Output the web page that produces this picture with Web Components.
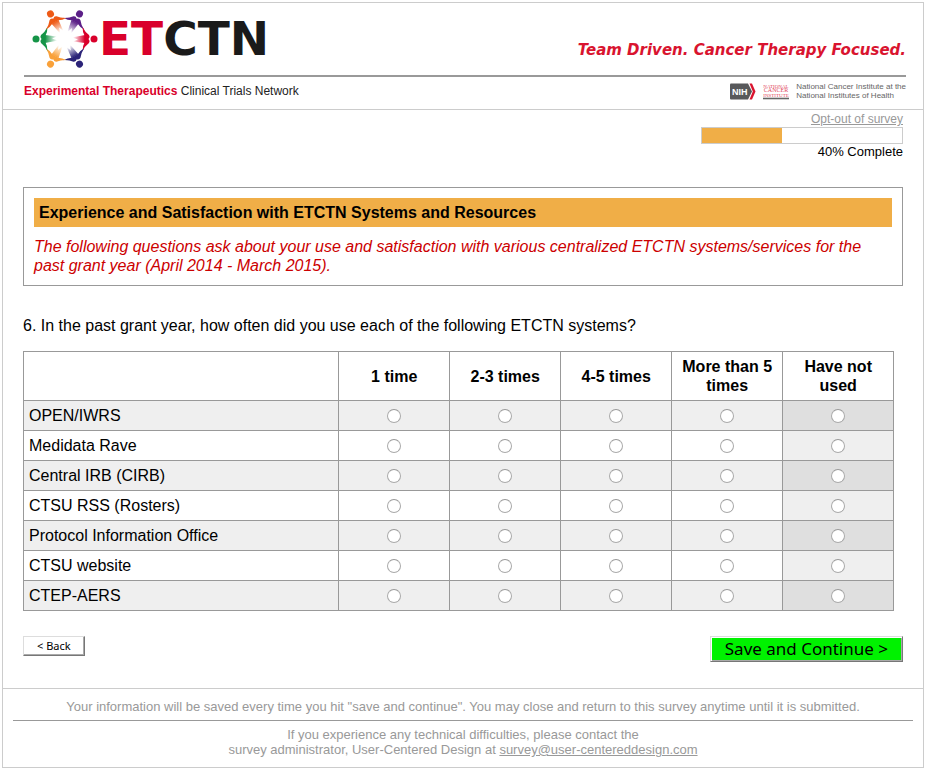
<!DOCTYPE html>
<html lang="en">
<head>
<meta charset="utf-8">
<title>ETCTN Survey</title>
<style>
  body {
    margin: 2px 1px 2px 2px;
    background: #fff;
    color: #000;
    font-family: "Liberation Sans", Arial, sans-serif;
    font-size: 16px;
    line-height: 19px;
  }
</style>
</head>
<body>
<survey-page>
  <etctn-header slot="header"></etctn-header>
  <survey-progress value="40"></survey-progress>
  <survey-intro>
    <span slot="title">Experience and Satisfaction with ETCTN Systems and Resources</span>
    The following questions ask about your use and satisfaction with various centralized ETCTN systems/services for the past grant year (April 2014 - March 2015).
  </survey-intro>
  <survey-matrix
    options="1 time|2-3 times|4-5 times|More than 5 times|Have not used"
    rows="OPEN/IWRS|Medidata Rave|Central IRB (CIRB)|CTSU RSS (Rosters)|Protocol Information Office|CTSU website|CTEP-AERS">6. In the past grant year, how often did you use each of the following ETCTN systems?</survey-matrix>
  <survey-actions></survey-actions>
  <survey-footer slot="footer"></survey-footer>
</survey-page>

<script>
class SurveyElement extends HTMLElement {
  constructor() {
    super();
    this.attachShadow({ mode: 'open' });
  }
  connectedCallback() {
    const template = document.createElement('template');
    template.innerHTML = `<style>${this.getStyles()}</style>${this.getTemplate()}`;
    this.shadowRoot.replaceChildren(template.content.cloneNode(true));
  }
}

class SurveyPage extends SurveyElement {
  getTemplate() {
    return `
      <slot name="header"></slot>
      <main><slot></slot></main>
      <slot name="footer"></slot>
    `;
  }
  getStyles() {
    return `
    :host {
      display: block;
      border: 1px solid #ccc;
    }
    main {
      padding: 2px 20px 26px;
    }
    `;
  }
}

class EtctnMark extends SurveyElement {
  // one figure, head up, turned round the centre for each colour
  getFigure(color, angle, i) {
    return `
      <linearGradient id="fade${i}" gradientUnits="userSpaceOnUse" x1="0" y1="-20" x2="0" y2="-8">
        <stop offset="0" stop-color="${color}"/>
        <stop offset="1" stop-color="${color}" stop-opacity="0"/>
      </linearGradient>
      <g transform="rotate(${angle})">
        <circle cx="0" cy="-29" r="3.5" fill="${color}"/>
        <path fill="${color}" d="M-12 -17.5Q-7 -20 -4 -24Q-2 -25.5 0 -23.5Q2 -25.5 4 -24Q7 -20 12 -17.5
          Q7 -17.5 3.5 -19.5H-3.5Q-7 -17.5 -12 -17.5Z"/>
        <path fill="url(#fade${i})" d="M-4 -20H4L2.6 -8L0.6 -13L-1.4 -7Z"/>
      </g>
    `;
  }
  getTemplate() {
    const colors = ['#5b1f87', '#d9002b', '#2b2378', '#f9a13a', '#159447', '#ee5a16'];
    return `
      <svg viewBox="-33 -33 66 66" width="66" height="66" aria-hidden="true">
        ${colors.map((color, i) => this.getFigure(color, 30 + i * 60, i)).join('')}
      </svg>
    `;
  }
  getStyles() {
    return `
    :host, svg {
      display: block;
    }
    `;
  }
}

class EtctnHeader extends SurveyElement {
  getTemplate() {
    return `
      <header>
        <div class="brand">
          <etctn-mark></etctn-mark>
          <div class="name"><b>ET</b>CTN</div>
          <div class="tagline">Team Driven. Cancer Therapy Focused.</div>
        </div>
        <div class="sub">
          <div class="network"><b>Experimental Therapeutics</b> Clinical Trials Network</div>
          <svg viewBox="0 0 26 17" width="26" height="17" role="img">
            <path d="M1 0.5H18L22 8.5L18 16.5H1Q0 16.5 0 15.5V1.5Q0 0.5 1 0.5Z" fill="#58595b"/>
            <path d="M19.5 0.5H22L25.5 8.5L22 16.5H19.5L22.8 8.5Z" fill="#d9142f"/>
            <text x="2" y="12" font-size="9" font-weight="bold" fill="#fff">NIH</text>
          </svg>
          <svg viewBox="0 0 26 17" width="26" height="17" role="img">
            <g font-family="Liberation Serif, serif" font-size="6" fill="#e2455a" text-anchor="middle">
              <text x="13" y="4.5" font-size="5">NATIONAL</text>
              <text x="13" y="9">CANCER</text>
              <text x="13" y="13.5" font-size="5">INSTITUTE</text>
            </g>
            <path d="M0 15.5H26" stroke="#666" stroke-width="1.6"/>
          </svg>
          <div class="nci-name">National Cancer Institute at the<br>National Institutes of Health</div>
        </div>
      </header>
    `;
  }
  getStyles() {
    return `
    :host {
      display: block;
      border-bottom: 1px solid #ccc;
    }
    header {
      padding: 0 17px 0 21px;
    }
    .brand {
      display: flex;
      align-items: center;
      height: 72px;
      padding-left: 8px;
      border-bottom: 2px solid #999;
    }
    .name {
      margin-left: 1px;
      color: #1a1a1a;
      font: bold 47px/60px "DejaVu Sans", sans-serif;
    }
    b {
      color: #d9002b;
    }
    .tagline {
      margin-left: auto;
      padding-top: 22px;
      color: #d9142f;
      font: italic bold 15px/19px "DejaVu Sans", sans-serif;
    }
    .sub {
      display: flex;
      align-items: center;
      gap: 7px;
      height: 28px;
      padding-bottom: 4px;
      color: #222;
      font-size: 12px;
    }
    .network {
      margin-right: auto;
    }
    .nci-name {
      color: #666;
      font-size: 8px;
      line-height: 9px;
    }
    `;
  }
}

class SurveyProgress extends SurveyElement {
  getTemplate() {
    const value = this.getAttribute('value');
    return `
      <a href="#opt-out">Opt-out of survey</a>
      <div class="bar" role="progressbar" aria-valuenow="${value}" aria-valuemin="0" aria-valuemax="100">
        <div class="fill"></div>
      </div>
      <div class="text">${value}% Complete</div>
    `;
  }
  getStyles() {
    return `
    :host {
      display: flex;
      flex-direction: column;
      align-items: flex-end;
      margin-bottom: 28px;
      line-height: 15px;
    }
    a {
      color: #999;
      font-size: 12px;
    }
    .bar {
      box-sizing: border-box;
      width: 202px;
      height: 17px;
      border: 1px solid #ccc;
    }
    .fill {
      width: ${this.getAttribute('value')}%;
      height: 100%;
      background: #f0ae47;
    }
    .text {
      font-size: 13px;
    }
    `;
  }
}

class SurveyIntro extends SurveyElement {
  getTemplate() {
    return `
      <h1><slot name="title"></slot></h1>
      <p><slot></slot></p>
    `;
  }
  getStyles() {
    return `
    :host {
      display: block;
      margin-bottom: 30px;
      padding: 10px;
      border: 1px solid #999;
    }
    h1 {
      margin: 0 0 10px;
      padding: 5px;
      background: #f0ae47;
      font-size: 16px;
    }
    p {
      margin: 0;
      color: #c00;
      font-style: italic;
    }
    `;
  }
}

class SurveyMatrix extends SurveyElement {
  getRow(name, row, options) {
    return `
      <tr>
        <th scope="row">${name}</th>
        ${options.map(option => `<td><input type="radio" name="row${row}" aria-label="${name}: ${option}"></td>`).join('')}
      </tr>
    `;
  }
  getTemplate() {
    const options = this.getAttribute('options').split('|');
    const rows = this.getAttribute('rows').split('|');
    return `
      <p><slot></slot></p>
      <table>
        <thead>
          <tr><td></td>${options.map(option => `<th scope="col">${option}</th>`).join('')}</tr>
        </thead>
        <tbody>${rows.map((name, i) => this.getRow(name, i, options)).join('')}</tbody>
      </table>
    `;
  }
  getStyles() {
    return `
    :host {
      display: block;
      margin-bottom: 25px;
    }
    p {
      margin: 0 0 16px;
    }
    table {
      width: 99%;
      table-layout: fixed;
      border-collapse: collapse;
    }
    th, td {
      box-sizing: border-box;
      height: 30px;
      padding: 0 5px;
      border: 1px solid #999;
    }
    thead th {
      width: 111px;
      height: 49px;
    }
    tbody th {
      font-weight: normal;
      text-align: left;
    }
    tbody tr:nth-child(odd) {
      background: #efefef;
    }
    tbody td:last-child {
      background: #efefef;
    }
    tbody tr:nth-child(odd) td:last-child {
      background: #dfdfdf;
    }
    input {
      appearance: none;
      display: block;
      width: 14px;
      height: 14px;
      margin: 0 auto;
      border: 1px solid #aaa;
      border-top-color: #999;
      border-radius: 50%;
      background: #fff;
    }
    input:checked {
      background: radial-gradient(#333 3px, #fff 4px);
    }
    `;
  }
}

class SurveyActions extends SurveyElement {
  getTemplate() {
    return `
      <button type="button">&lt; Back</button>
      <button type="button" class="save">Save and Continue &gt;</button>
    `;
  }
  getStyles() {
    return `
    :host {
      display: flex;
      align-items: flex-start;
      justify-content: space-between;
    }
    button {
      height: 20px;
      padding: 0 13px;
      border: 1px solid;
      border-color: #ddd #777 #777 #ddd;
      box-shadow: inset -1px -1px #aaa;
      background: #fff;
      color: #000;
      font: 11px/16px "Noto Sans", sans-serif;
    }
    .save {
      height: 26px;
      padding: 0 14px;
      box-shadow: inset 1px 1px #fff, inset -1px -1px #aaa;
      background: #00f200;
      font-size: 17px;
      line-height: 22px;
    }
    `;
  }
}

class SurveyFooter extends SurveyElement {
  getTemplate() {
    return `
      <footer>
        <p class="note">Your information will be saved every time you hit "save and continue". You may close and return to this survey anytime until it is submitted.</p>
        <p class="help">If you experience any technical difficulties, please contact the<br>
        survey administrator, User-Centered Design at <a href="mailto:survey@user-centereddesign.com">survey@user-centereddesign.com</a></p>
      </footer>
    `;
  }
  getStyles() {
    return `
    :host {
      display: block;
      border-top: 1px solid #ccc;
    }
    footer {
      padding: 10px;
      color: #999;
      font-size: 13px;
      text-align: center;
    }
    p {
      margin: 0;
      line-height: 15px;
    }
    .note {
      padding-bottom: 6px;
      border-bottom: 1px solid #999;
    }
    .help {
      padding-top: 6px;
    }
    a {
      color: inherit;
    }
    `;
  }
}

customElements.define('etctn-mark', EtctnMark);
customElements.define('etctn-header', EtctnHeader);
customElements.define('survey-progress', SurveyProgress);
customElements.define('survey-intro', SurveyIntro);
customElements.define('survey-matrix', SurveyMatrix);
customElements.define('survey-actions', SurveyActions);
customElements.define('survey-footer', SurveyFooter);
customElements.define('survey-page', SurveyPage);
</script>
</body>
</html>
